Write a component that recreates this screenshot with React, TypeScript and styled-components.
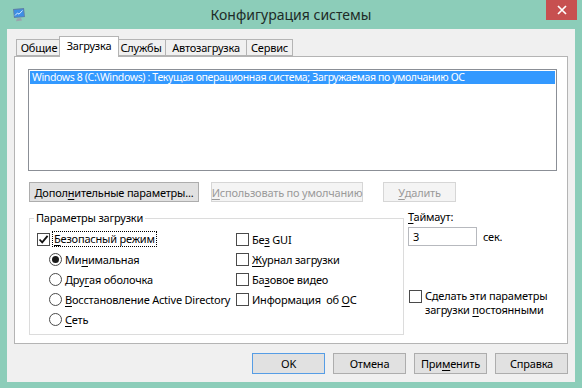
import React from "react";
import styled, { createGlobalStyle } from "styled-components";

const GlobalStyle = createGlobalStyle`
  html, body {
    margin: 0;
    padding: 0;
    background: #8ccdb9;
  }
  body {
    font-family: "Noto Sans", "Liberation Sans", sans-serif;
    font-size: 11px;
    letter-spacing: -0.2px;
    color: #000;
  }
  * {
    box-sizing: border-box;
  }
`;

const Window = styled.div`
  width: 582px;
  height: 388px;
  background: #8ccdb9;
  display: flex;
  flex-direction: column;
  overflow: hidden;
`;

const TitleBar = styled.div`
  height: 29px;
  flex: none;
  display: grid;
  grid-template-columns: 1fr auto 1fr;
  align-items: start;
  padding: 0 5px;
`;

const TitleIcon = styled.div`
  padding: 7px 0 0 6px;
  height: 29px;
`;

const TitleText = styled.div`
  font-size: 14px;
  letter-spacing: 0;
  line-height: 30px;
  color: #1d2b27;
`;

const CloseButton = styled.div`
  justify-self: end;
  width: 31px;
  height: 20px;
  background: #c75050;
  display: flex;
  align-items: center;
  justify-content: center;
`;

const Client = styled.div`
  flex: 1;
  margin: 0 7px 6px 7px;
  background: #f0f0f0;
  padding: 7px 7px 0 7px;
  display: flex;
  flex-direction: column;
`;

const TabStrip = styled.div`
  height: 20px;
  display: flex;
  align-items: flex-end;
  padding-left: 2px;
`;

const Tab = styled.div<{ $active?: boolean; $w: number }>`
  position: relative;
  width: ${(p) => p.$w}px;
  height: ${(p) => (p.$active ? "21px" : "17px")};
  margin: ${(p) => (p.$active ? "0 -2px -1px -3px" : "0 0 0 -1px")};
  padding-bottom: ${(p) => (p.$active ? "3px" : "0")};
  background: ${(p) => (p.$active ? "#ffffff" : "#f0f0f0")};
  border: 1px solid #b4b4b4;
  border-bottom: ${(p) => (p.$active ? "none" : "1px solid #b4b4b4")};
  z-index: ${(p) => (p.$active ? 2 : 1)};
  display: flex;
  align-items: center;
  justify-content: center;
  line-height: 14px;
  white-space: nowrap;
  &:first-child {
    margin-left: 0;
  }
`;

const Panel = styled.div`
  height: 288px;
  background: #ffffff;
  border: 1px solid #b4b4b4;
  padding: 12px 9px 0 13px;
  display: flex;
  flex-direction: column;
`;

const ListBox = styled.div`
  width: 529px;
  height: 102px;
  border: 1px solid #8b8f96;
  background: #ffffff;
  padding: 1px;
`;

const ListItem = styled.div<{ $selected?: boolean }>`
  height: 13px;
  line-height: 13px;
  padding-left: 2px;
  font-size: 10.5px;
  letter-spacing: -0.35px;
  white-space: nowrap;
  overflow: hidden;
  background: ${(p) => (p.$selected ? "#3399ff" : "transparent")};
  color: ${(p) => (p.$selected ? "#ffffff" : "#000000")};
`;

const ButtonRow = styled.div`
  display: flex;
  margin: 11px 0 0 1px;
`;

const Button = styled.div<{ $w: number; $gap?: number; $disabled?: boolean; $default?: boolean }>`
  width: ${(p) => p.$w}px;
  height: ${(p) => (p.$default !== undefined ? 21 : 20)}px;
  margin-left: ${(p) => p.$gap ?? 0}px;
  display: flex;
  align-items: center;
  justify-content: center;
  white-space: nowrap;
  background: ${(p) => (p.$disabled ? "#f4f4f4" : "#e1e1e1")};
  color: ${(p) => (p.$disabled ? "#9a9a9a" : "#000000")};
  border: 1px solid
    ${(p) => (p.$default ? "#569de5" : p.$disabled ? "#d6d6d6" : "#adadad")};
`;

const LowerRow = styled.div`
  display: flex;
  align-items: flex-start;
  margin: 8px 0 0 1px;
`;

const GroupBox = styled.fieldset`
  width: 375px;
  margin: 0;
  padding: 3px 0 5px 7px;
  border: 1px solid #dcdcdc;
  display: flex;
  min-width: 0;
`;

const Legend = styled.legend`
  padding: 0 2px;
  margin-left: -3px;
  line-height: 16px;
  color: #000;
`;

const Column = styled.div<{ $w?: number }>`
  display: flex;
  flex-direction: column;
  width: ${(p) => (p.$w ? `${p.$w}px` : "auto")};
`;

const OptionRow = styled.div<{ $indent?: number }>`
  height: 20px;
  display: flex;
  align-items: center;
  gap: 3px;
  padding-left: ${(p) => p.$indent ?? 0}px;
  white-space: pre;
`;

const Box = styled.span`
  width: 13px;
  height: 13px;
  flex: none;
  border: 1px solid #4a4a4a;
  background: #ffffff;
  display: inline-flex;
  align-items: center;
  justify-content: center;
`;

const Round = styled.span`
  width: 13px;
  height: 13px;
  flex: none;
  border: 1px solid #4a4a4a;
  border-radius: 50%;
  background: #ffffff;
  display: inline-flex;
  align-items: center;
  justify-content: center;
`;

const Dot = styled.span`
  width: 7px;
  height: 7px;
  border-radius: 50%;
  background: #1a1a1a;
`;

const Focus = styled.span`
  outline: 1px dotted #000;
  outline-offset: 0;
  padding: 0 1px;
  line-height: 14px;
`;

const Key = styled.span`
  text-decoration: underline;
  text-underline-offset: 2px;
`;

const SideColumn = styled.div`
  margin-left: 4px;
  display: flex;
  flex-direction: column;
  white-space: nowrap;
`;

const FieldLabel = styled.div`
  line-height: 14px;
`;

const InputRow = styled.div`
  display: flex;
  align-items: center;
  gap: 6px;
  margin-top: 3px;
`;

const TextInput = styled.div`
  width: 69px;
  height: 19px;
  border: 1px solid #b7b9be;
  background: #ffffff;
  padding-left: 4px;
  line-height: 17px;
`;

const PersistRow = styled.div`
  display: flex;
  align-items: flex-start;
  gap: 3px;
  margin: 43px 0 0 1px;
  line-height: 14px;
  & > span:first-child {
    margin-top: 1px;
  }
`;

const Footer = styled.div`
  display: flex;
  justify-content: flex-end;
  gap: 8px;
  margin-top: 9px;
`;

const Check = () => (
  <svg width="11" height="11" viewBox="0 0 11 11">
    <path d="M1.5 5.5 L4.2 8.3 L9.6 1.8" fill="none" stroke="#111" strokeWidth="1.8" />
  </svg>
);

const MonitorIcon = () => (
  <svg width="16" height="16" viewBox="0 0 16 16">
    <path d="M2 2 L13 1 L14 10 L3 11 Z" fill="#5f7fa8" />
    <path d="M3 3 L12.2 2.2 L13 9.2 L3.8 10 Z" fill="#3d8fe6" />
    <path d="M4 8.5 L6.5 6 L8 7.2 L11.5 3.5" fill="none" stroke="#e8f4ff" strokeWidth="0.9" />
    <path d="M6 11.5 L10 11 L11 13.5 L5 14.2 Z" fill="#9aa3ad" />
  </svg>
);

const CloseIcon = () => (
  <svg width="10" height="10" viewBox="0 0 10 10">
    <path d="M1 1 L9 9 M9 1 L1 9" stroke="#ffffff" strokeWidth="1.7" />
  </svg>
);

export default function App() {
  return (
    <>
      <GlobalStyle />
      <Window>
        <TitleBar>
          <TitleIcon>
            <MonitorIcon />
          </TitleIcon>
          <TitleText>Конфигурация системы</TitleText>
          <CloseButton>
            <CloseIcon />
          </CloseButton>
        </TitleBar>
        <Client>
          <TabStrip>
            <Tab $w={46}>Общие</Tab>
            <Tab $w={60} $active>
              Загрузка
            </Tab>
            <Tab $w={50}>Службы</Tab>
            <Tab $w={82}>Автозагрузка</Tab>
            <Tab $w={47}>Сервис</Tab>
          </TabStrip>
          <Panel>
            <ListBox>
              <ListItem $selected>
                Windows 8 (C:\Windows) : Текущая операционная система; Загружаемая по умолчанию ОС
              </ListItem>
            </ListBox>
            <ButtonRow>
              <Button $w={170}>
                Допол<Key>н</Key>ительные параметры...
              </Button>
              <Button $w={152} $gap={12} $disabled>
                <Key>И</Key>спользовать по умолчанию
              </Button>
              <Button $w={73} $gap={20} $disabled>
                <Key>У</Key>далить
              </Button>
            </ButtonRow>
            <LowerRow>
              <GroupBox>
                <Legend>Параметры загрузки</Legend>
                <Column $w={199}>
                  <OptionRow>
                    <Box>
                      <Check />
                    </Box>
                    <Focus>
                      <Key>Б</Key>езопасный режим
                    </Focus>
                  </OptionRow>
                  <OptionRow $indent={12}>
                    <Round>
                      <Dot />
                    </Round>
                    <span>
                      Ми<Key>н</Key>имальная
                    </span>
                  </OptionRow>
                  <OptionRow $indent={12}>
                    <Round />
                    <span>
                      Дру<Key>г</Key>ая оболочка
                    </span>
                  </OptionRow>
                  <OptionRow $indent={12}>
                    <Round />
                    <span>
                      <Key>В</Key>осстановление Active Directory
                    </span>
                  </OptionRow>
                  <OptionRow $indent={12}>
                    <Round />
                    <span>
                      <Key>С</Key>еть
                    </span>
                  </OptionRow>
                </Column>
                <Column>
                  <OptionRow>
                    <Box />
                    <span>
                      Бе<Key>з</Key> GUI
                    </span>
                  </OptionRow>
                  <OptionRow>
                    <Box />
                    <span>
                      <Key>Ж</Key>урнал загрузки
                    </span>
                  </OptionRow>
                  <OptionRow>
                    <Box />
                    <span>
                      Ба<Key>з</Key>овое видео
                    </span>
                  </OptionRow>
                  <OptionRow>
                    <Box />
                    <span>
                      Информация  об <Key>О</Key>С
                    </span>
                  </OptionRow>
                </Column>
              </GroupBox>
              <SideColumn>
                <FieldLabel>
                  <Key>Т</Key>аймаут:
                </FieldLabel>
                <InputRow>
                  <TextInput>3</TextInput>
                  <span>сек.</span>
                </InputRow>
                <PersistRow>
                  <Box />
                  <span>
                    Сделать эти параметры
                    <br />
                    загрузки <Key>п</Key>остоянными
                  </span>
                </PersistRow>
              </SideColumn>
            </LowerRow>
          </Panel>
          <Footer>
            <Button $w={73} $default>
              OK
            </Button>
            <Button $w={73} $default={false}>
              Отмена
            </Button>
            <Button $w={73} $default={false}>
              При<Key>м</Key>енить
            </Button>
            <Button $w={73} $default={false}>
              Справка
            </Button>
          </Footer>
        </Client>
      </Window>
    </>
  );
}
